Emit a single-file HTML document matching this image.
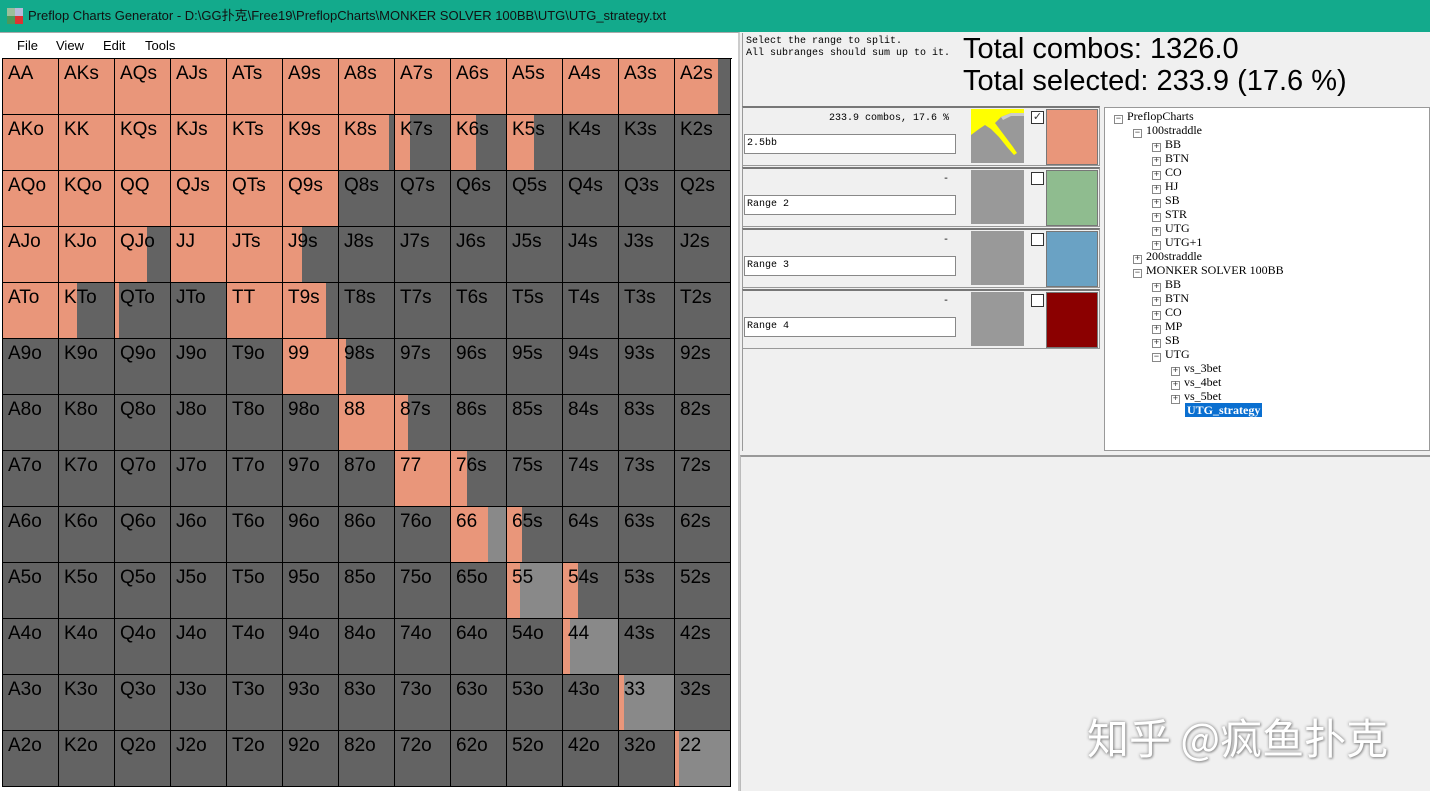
<!DOCTYPE html>
<html><head><meta charset="utf-8"><style>
*{margin:0;padding:0;box-sizing:border-box}
body{width:1430px;height:791px;overflow:hidden;background:#f0f0f0;font-family:"Liberation Sans",sans-serif;position:relative}
.title{position:absolute;left:0;top:0;width:1430px;height:32px;background:#13aa8c;color:#111;font-size:13px;line-height:32px;padding-left:28px;font-family:"Liberation Sans","Noto Sans CJK SC",sans-serif}
.logo{position:absolute;left:7px;top:8px;width:16px;height:16px}
.left{position:absolute;left:0;top:32px;width:740px;height:759px;background:#fff;border-right:2px solid #ccc;border-top:1px solid #aaa}
.menu{position:absolute;left:0;top:0;height:26px;font-size:13px;line-height:26px}
.menu span{position:absolute;top:0;white-space:nowrap}
.grid{position:absolute;left:2px;top:25px;width:730px;display:grid;grid-template-columns:repeat(13,56px);border-left:1px solid #000;border-top:1px solid #000}
.grid div{height:56px;border-right:1px solid #000;border-bottom:1px solid #000;background:#636363;font-size:19px;padding:4px 0 0 5px;color:#000;line-height:22px}
.grid div.o{background:#e9967a}
.grid div.p{background:linear-gradient(to right,#e9967a var(--w),#636363 var(--w))}
.grid div.l{background:linear-gradient(to right,#e9967a var(--w),#898989 var(--w))}
.mono{font-family:"Liberation Mono","Noto Serif CJK SC",monospace}
.abs{position:absolute}
.rrow{position:absolute;left:742px;width:358px;height:60px;border:1px solid #999;border-top:2px solid #777;background:#f0f0f0}
.inp{position:absolute;left:1px;top:26px;width:212px;height:20px;background:#fff;border:1px solid #888;font-size:10px;line-height:18px;padding-left:2px;font-family:"Liberation Mono",monospace}
.info{position:absolute;right:150px;top:5px;font-size:10px;font-family:"Liberation Mono",monospace}
.thumb{position:absolute;left:228px;top:1px;width:53px;height:54px;background:#999}
.chk{position:absolute;left:288px;top:3px;width:13px;height:13px;background:#fff;border:1px solid #333}
.sw{position:absolute;left:303px;top:1px;width:52px;height:56px;border:1px solid #777}
.tree{position:absolute;left:1104px;top:107px;width:326px;height:344px;background:#fff;border:1px solid #999;font-family:"Liberation Serif","Liberation Mono",serif;font-size:12px}
.tree div{position:absolute;height:14px;line-height:14px;white-space:nowrap}
.tree b{display:inline-block;width:9px;height:9px;border:1px solid #888;font-weight:normal;font-size:9px;line-height:7px;text-align:center;margin-right:4px;vertical-align:-1px;color:#333;font-family:"Liberation Mono",monospace}
</style></head><body>
<div class="title"><svg class="logo" viewBox="0 0 16 16"><rect x="0" y="0" width="8" height="8" fill="#9bbf9b"/><rect x="8" y="0" width="8" height="8" fill="#b9b9d9"/><rect x="0" y="8" width="8" height="8" fill="#4a9a5a"/><rect x="8" y="8" width="8" height="8" fill="#d33"/></svg>Preflop Charts Generator - D:\GG扑克\Free19\PreflopCharts\MONKER SOLVER 100BB\UTG\UTG_strategy.txt</div>
<div class="left">
<div class="menu"><span style="left:17px">File</span><span style="left:56px">View</span><span style="left:103px">Edit</span><span style="left:145px">Tools</span></div>
<div class="grid">
<div class="o">AA</div><div class="o">AKs</div><div class="o">AQs</div><div class="o">AJs</div><div class="o">ATs</div><div class="o">A9s</div><div class="o">A8s</div><div class="o">A7s</div><div class="o">A6s</div><div class="o">A5s</div><div class="o">A4s</div><div class="o">A3s</div><div class="p" style="--w:43px">A2s</div>
<div class="o">AKo</div><div class="o">KK</div><div class="o">KQs</div><div class="o">KJs</div><div class="o">KTs</div><div class="o">K9s</div><div class="p" style="--w:50px">K8s</div><div class="p" style="--w:15px">K7s</div><div class="p" style="--w:25px">K6s</div><div class="p" style="--w:27px">K5s</div><div>K4s</div><div>K3s</div><div>K2s</div>
<div class="o">AQo</div><div class="o">KQo</div><div class="o">QQ</div><div class="o">QJs</div><div class="o">QTs</div><div class="o">Q9s</div><div>Q8s</div><div>Q7s</div><div>Q6s</div><div>Q5s</div><div>Q4s</div><div>Q3s</div><div>Q2s</div>
<div class="o">AJo</div><div class="o">KJo</div><div class="p" style="--w:32px">QJo</div><div class="o">JJ</div><div class="o">JTs</div><div class="p" style="--w:19px">J9s</div><div>J8s</div><div>J7s</div><div>J6s</div><div>J5s</div><div>J4s</div><div>J3s</div><div>J2s</div>
<div class="o">ATo</div><div class="p" style="--w:18px">KTo</div><div class="p" style="--w:4px">QTo</div><div>JTo</div><div class="o">TT</div><div class="p" style="--w:43px">T9s</div><div>T8s</div><div>T7s</div><div>T6s</div><div>T5s</div><div>T4s</div><div>T3s</div><div>T2s</div>
<div>A9o</div><div>K9o</div><div>Q9o</div><div>J9o</div><div>T9o</div><div class="o">99</div><div class="p" style="--w:7px">98s</div><div>97s</div><div>96s</div><div>95s</div><div>94s</div><div>93s</div><div>92s</div>
<div>A8o</div><div>K8o</div><div>Q8o</div><div>J8o</div><div>T8o</div><div>98o</div><div class="o">88</div><div class="p" style="--w:13px">87s</div><div>86s</div><div>85s</div><div>84s</div><div>83s</div><div>82s</div>
<div>A7o</div><div>K7o</div><div>Q7o</div><div>J7o</div><div>T7o</div><div>97o</div><div>87o</div><div class="o">77</div><div class="p" style="--w:16px">76s</div><div>75s</div><div>74s</div><div>73s</div><div>72s</div>
<div>A6o</div><div>K6o</div><div>Q6o</div><div>J6o</div><div>T6o</div><div>96o</div><div>86o</div><div>76o</div><div class="l" style="--w:37px">66</div><div class="p" style="--w:15px">65s</div><div>64s</div><div>63s</div><div>62s</div>
<div>A5o</div><div>K5o</div><div>Q5o</div><div>J5o</div><div>T5o</div><div>95o</div><div>85o</div><div>75o</div><div>65o</div><div class="l" style="--w:13px">55</div><div class="p" style="--w:15px">54s</div><div>53s</div><div>52s</div>
<div>A4o</div><div>K4o</div><div>Q4o</div><div>J4o</div><div>T4o</div><div>94o</div><div>84o</div><div>74o</div><div>64o</div><div>54o</div><div class="l" style="--w:7px">44</div><div>43s</div><div>42s</div>
<div>A3o</div><div>K3o</div><div>Q3o</div><div>J3o</div><div>T3o</div><div>93o</div><div>83o</div><div>73o</div><div>63o</div><div>53o</div><div>43o</div><div class="l" style="--w:5px">33</div><div>32s</div>
<div>A2o</div><div>K2o</div><div>Q2o</div><div>J2o</div><div>T2o</div><div>92o</div><div>82o</div><div>72o</div><div>62o</div><div>52o</div><div>42o</div><div>32o</div><div class="l" style="--w:4px">22</div>
</div>
</div>
<div class="abs" style="left:742px;top:33px;width:688px;height:418px;border-left:1px solid #999"></div>
<div class="abs mono" style="left:746px;top:36px;font-size:10px;line-height:12px;white-space:pre">Select the range to split.
All subranges should sum up to it.</div>
<div class="abs" style="left:963px;top:33px;font-size:29px;line-height:32px;color:#000">Total combos: 1326.0<br>Total selected: 233.9 (17.6 %)</div>

<div class="rrow" style="top:106px"><div class="info">233.9 combos, 17.6 %</div><div class="inp">2.5bb</div>
<svg class="thumb" viewBox="0 0 53 54"><rect width="53" height="54" fill="#999"/><polygon points="0,0 53,0 53,4 40,4 30,8 24,14 30,22 36,30 42,38 46,44 43,46 36,38 28,28 20,20 14,16 8,20 0,26" fill="#ffff00"/><polygon points="30,8 40,4 53,4 53,7 40,7 32,11" fill="#ccc"/></svg>
<div class="chk" style="font-size:11px;line-height:10px;text-align:center;color:#333">✓</div><div class="sw" style="background:#e9967a"></div></div>
<div class="rrow" style="top:167px"><div class="info">-</div><div class="inp">Range 2</div><div class="thumb"></div><div class="chk"></div><div class="sw" style="background:#8fbc8f"></div></div>
<div class="rrow" style="top:228px"><div class="info">-</div><div class="inp">Range 3</div><div class="thumb"></div><div class="chk"></div><div class="sw" style="background:#6aa2c4"></div></div>
<div class="rrow" style="top:289px"><div class="info">-</div><div class="inp">Range 4</div><div class="thumb"></div><div class="chk"></div><div class="sw" style="background:#8b0000"></div></div>

<div class="tree">
<div style="left:9px;top:1px"><b>−</b>PreflopCharts</div>
<div style="left:28px;top:15px"><b>−</b>100straddle</div>
<div style="left:47px;top:29px"><b>+</b>BB</div>
<div style="left:47px;top:43px"><b>+</b>BTN</div>
<div style="left:47px;top:57px"><b>+</b>CO</div>
<div style="left:47px;top:71px"><b>+</b>HJ</div>
<div style="left:47px;top:85px"><b>+</b>SB</div>
<div style="left:47px;top:99px"><b>+</b>STR</div>
<div style="left:47px;top:113px"><b>+</b>UTG</div>
<div style="left:47px;top:127px"><b>+</b>UTG+1</div>
<div style="left:28px;top:141px"><b>+</b>200straddle</div>
<div style="left:28px;top:155px"><b>−</b>MONKER SOLVER 100BB</div>
<div style="left:47px;top:169px"><b>+</b>BB</div>
<div style="left:47px;top:183px"><b>+</b>BTN</div>
<div style="left:47px;top:197px"><b>+</b>CO</div>
<div style="left:47px;top:211px"><b>+</b>MP</div>
<div style="left:47px;top:225px"><b>+</b>SB</div>
<div style="left:47px;top:239px"><b>−</b>UTG</div>
<div style="left:66px;top:253px"><b>+</b>vs_3bet</div>
<div style="left:66px;top:267px"><b>+</b>vs_4bet</div>
<div style="left:66px;top:281px"><b>+</b>vs_5bet</div>
<div style="left:80px;top:295px;background:#0a6fd0;color:#fff;font-weight:bold;padding:0 2px">UTG_strategy</div>
</div>
<div class="abs" style="left:740px;top:455px;width:690px;height:336px;background:#f0f0f0;border-top:2px solid #999;border-left:1px solid #bbb"></div>
<div class="abs" style="left:1087px;top:706px;font-size:42px;color:#fff;text-shadow:0 0 3px #888,1px 1px 2px #999;font-family:'Noto Sans CJK SC',sans-serif;white-space:nowrap">知乎 @疯鱼扑克</div>
</body></html>
